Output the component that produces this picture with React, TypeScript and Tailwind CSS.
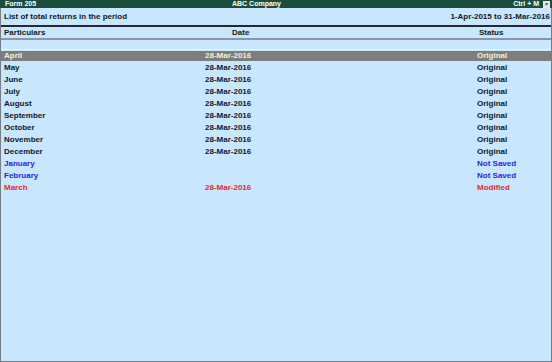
const rows: { month: string; date: string; status: string; tone: "sel" | "normal" | "blue" | "red" }[] = [
  { month: "April", date: "28-Mar-2016", status: "Original", tone: "sel" },
  { month: "May", date: "28-Mar-2016", status: "Original", tone: "normal" },
  { month: "June", date: "28-Mar-2016", status: "Original", tone: "normal" },
  { month: "July", date: "28-Mar-2016", status: "Original", tone: "normal" },
  { month: "August", date: "28-Mar-2016", status: "Original", tone: "normal" },
  { month: "September", date: "28-Mar-2016", status: "Original", tone: "normal" },
  { month: "October", date: "28-Mar-2016", status: "Original", tone: "normal" },
  { month: "November", date: "28-Mar-2016", status: "Original", tone: "normal" },
  { month: "December", date: "28-Mar-2016", status: "Original", tone: "normal" },
  { month: "January", date: "", status: "Not Saved", tone: "blue" },
  { month: "February", date: "", status: "Not Saved", tone: "blue" },
  { month: "March", date: "28-Mar-2016", status: "Modified", tone: "red" },
];

const toneClass = {
  sel: "bg-[#7d7d7d] text-[#f4f0dc]",
  normal: "text-[#101828]",
  blue: "text-[#2626f2]",
  red: "text-[#f2242c]",
};

const App = () => {
  return (
    <div className="w-[552px] h-[362px] flex flex-col bg-[#c8e6fd] font-['Liberation_Sans',Arial,sans-serif] font-bold overflow-hidden">
      {/* Title bar */}
      <div className="h-[8px] bg-[#1b4d3d] text-white text-[7px] leading-[8px] flex items-center px-[5px] pr-[2px] relative">
        <span>Form 205</span>
        <span className="absolute left-[232px]">ABC Company</span>
        <span className="ml-auto mr-[4px]">Ctrl + M</span>
        <span className="w-[7px] h-[7px] bg-[#e8e8e8] text-[#333] text-[6px] leading-[7px] text-center">×</span>
      </div>

      {/* Body with frame */}
      <div className="flex-1 flex flex-col border-x border-b border-[#767d86]">
        <div className="h-[17px] flex items-center justify-between pl-[3px] pr-[1px] text-[8px] text-[#101828]">
          <span>List of total returns in the period</span>
          <span>1-Apr-2015 to 31-Mar-2016</span>
        </div>
        <div className="h-[2px] bg-[#26292d]" />
        <div className="h-[11px] grid grid-cols-[201px_272px_1fr] items-center text-[8px] text-[#101828] pl-[3px]">
          <span>Particulars</span>
          <span className="pl-[27px]">Date</span>
          <span className="pl-[2px]">Status</span>
        </div>
        <div className="h-[2px] bg-[#8a96a3]" />
        <div className="h-[9px]" />
        <div className="h-[1px] bg-[#e6f2fc]" />

        <div className="flex flex-col">
          {rows.map((r, i) => (
            <div key={i} className="h-[12px] flex items-center">
              <div
                className={`w-full h-[10px] grid grid-cols-[201px_272px_1fr] items-center pl-[3px] text-[8px] leading-[10px] ${toneClass[r.tone]}`}
              >
                <span>{r.month}</span>
                <span>{r.date}</span>
                <span>{r.status}</span>
              </div>
            </div>
          ))}
        </div>
      </div>
    </div>
  );
};

export default App;
